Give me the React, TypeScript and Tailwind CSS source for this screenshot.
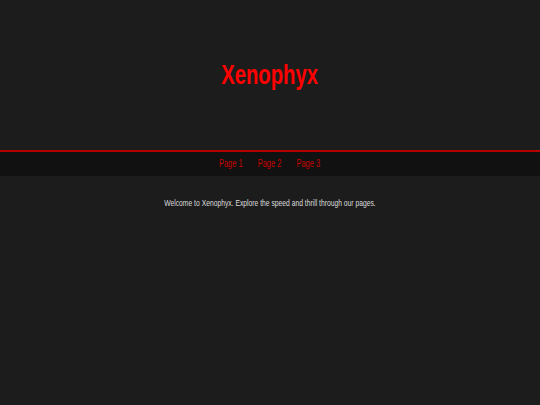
import React from 'react';

const links = ['Page 1', 'Page 2', 'Page 3'];

const App: React.FC = () => {
  return (
    <div className="min-h-[405px] w-full bg-[#1c1c1c] font-['Liberation_Sans',Arial,sans-serif]">
      {/* Header */}
      <header className="flex h-[150px] items-center justify-center">
        <h1 className="scale-x-75 text-[27px] font-bold leading-none text-[#ff0000]">Xenophyx</h1>
      </header>

      {/* Nav */}
      <nav className="flex h-[26px] items-center justify-center border-t-2 border-[#b40000] bg-[#111111]">
        <div className="flex scale-x-75 items-center gap-5 text-[10px] leading-none">
          {links.map((l) => (
            <a key={l} href="#" className="text-[#c80000]">
              {l}
            </a>
          ))}
        </div>
      </nav>

      {/* Content */}
      <main className="pt-[21px] text-center">
        <p className="scale-x-75 text-[9px] leading-[12px] text-[#dddddd]">
          Welcome to Xenophyx. Explore the speed and thrill through our pages.
        </p>
      </main>
    </div>
  );
};

export default App;
